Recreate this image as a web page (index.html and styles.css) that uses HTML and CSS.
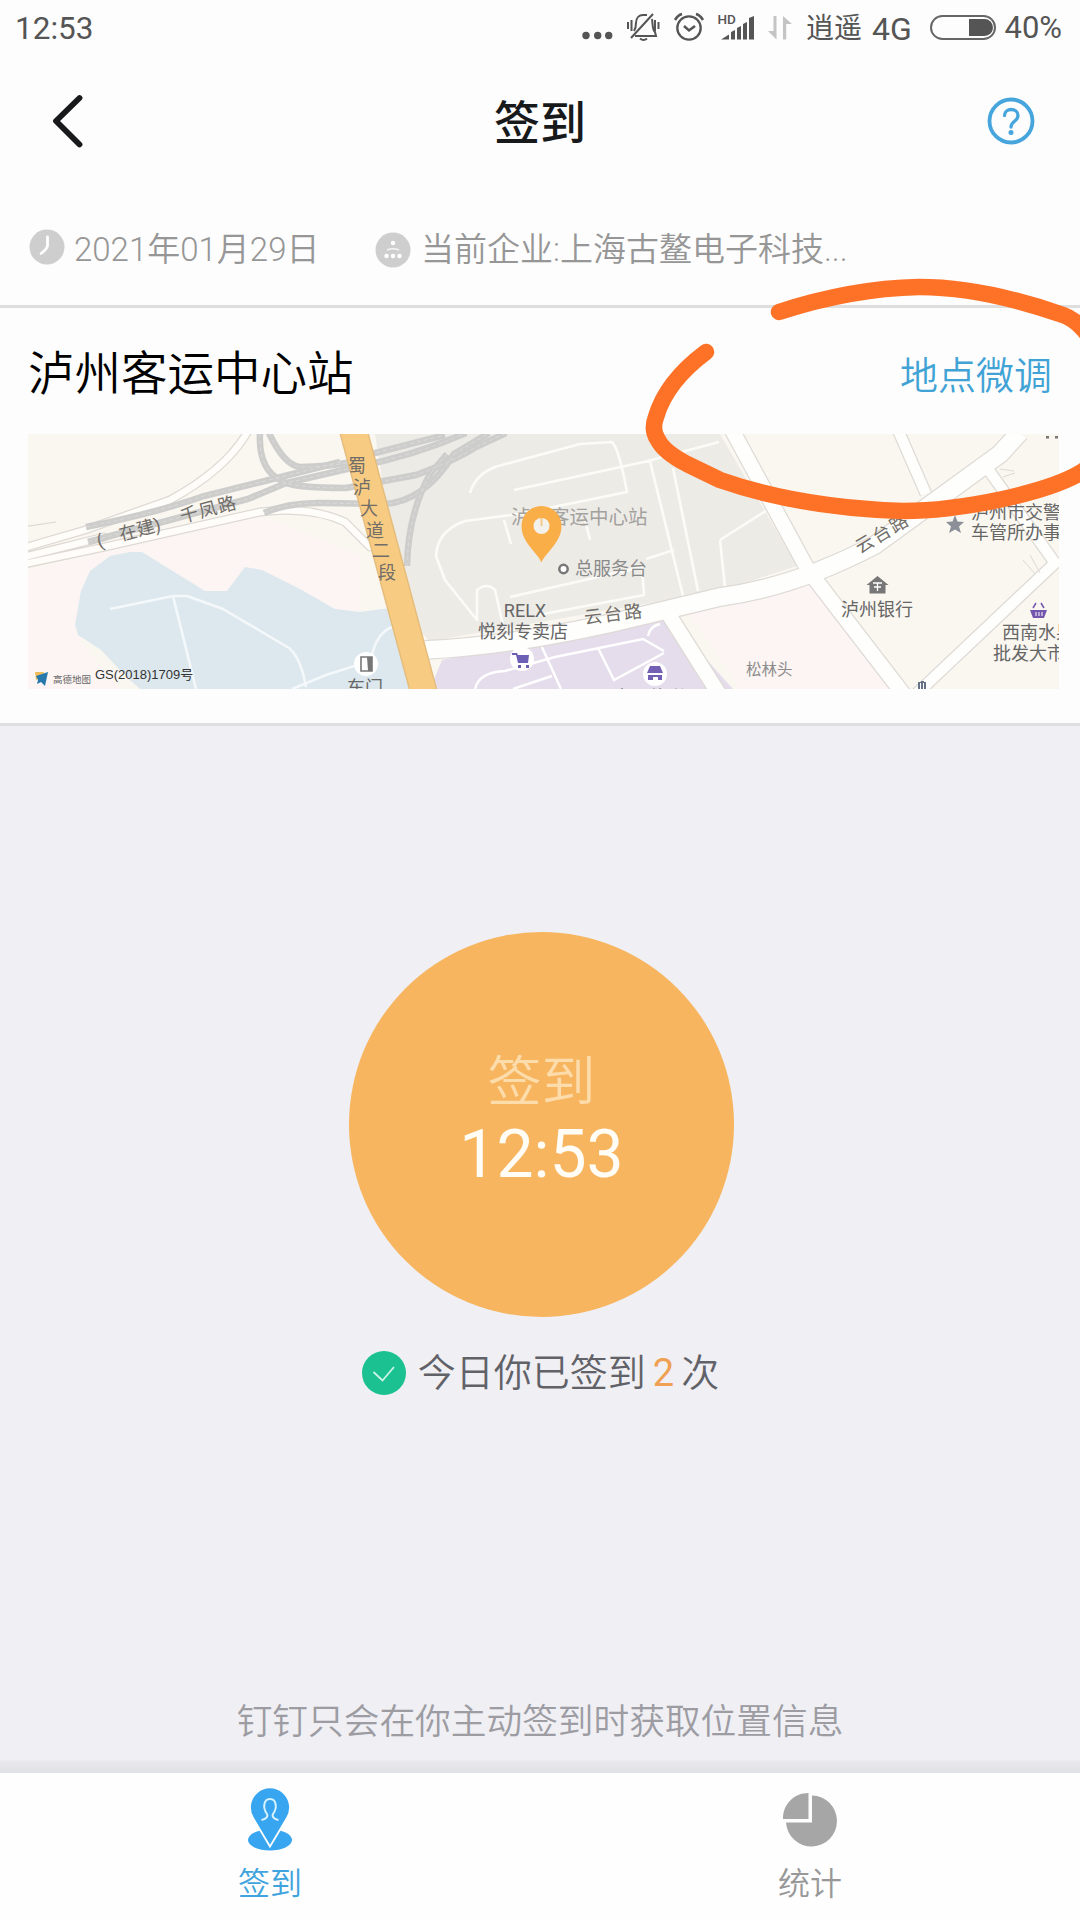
FILE: index.html
```html
<!DOCTYPE html>
<html lang="zh-CN">
<head>
<meta charset="utf-8">
<title>签到</title>
<link rel="stylesheet" href="styles.css">
</head>
<body>
<div class="app">
  <div class="statusbar">
    <span class="clock">12:53</span>
    <svg class="status-icons" width="216" height="48" viewBox="580 0 216 48">
      <g fill="#555"><circle cx="586" cy="35.5" r="3.7"/><circle cx="597.7" cy="35.5" r="3.7"/><circle cx="608.7" cy="35.5" r="3.7"/></g>
      <g fill="none" stroke="#555" stroke-width="2">
        <path d="M634 31c2-3 2-5 2-8 0-5 3-8 7-8h4M652 19c1 6 0 10 3 13l1 4h-21M653 14l-22 24M628 22v7M631.5 20v11M655 20v11M658.5 22v7"/>
        <path d="M640 38.5q3.500 3 7 0"/>
        <circle cx="689" cy="28" r="11.700" stroke-width="2.300"/>
        <path d="M684 26l5 4.500 6-4.500M675 20q3-5 7-6M703 20q-3-5-7-6" stroke-width="2.500"/>
      </g>
      <text x="717.500" y="24" class="hd">HD</text>
      <path fill="#555" d="M721 39.500l8-5v5zM731 32l4-2v9.500h-4zM737 28l4-2v13.500h-4zM743 24l4-2v17.500h-4zM749 18l5-2v23.500h-5z"/>
      <path fill="#c4c4c4" d="M773.500 16h3v23.500L768 31h5.500zM783 39.500h3.200V24H792l-9-8z"/>
    </svg>
    <span class="carrier">逍遥</span>
    <span class="network">4G</span>
    <span class="battery"><span class="charge"></span></span>
    <span class="percent">40%</span>
  </div>

  <header class="header">
    <svg width="40" height="60" viewBox="48 91 40 60"><path d="M79.500 98L56 121l23.500 23.500" fill="none" stroke="#18191a" stroke-width="5.800" stroke-linecap="round" stroke-linejoin="round"/></svg>
    <h1 class="title">签到</h1>
    <svg width="50" height="50" viewBox="986 96 50 50" fill="none" stroke="#45a5dc" stroke-linecap="round"><circle cx="1011" cy="121" r="21.500" stroke-width="3.800"/><path d="M1004.500 115.500c0-8 13.500-8 13.500 0 0 6-7 5.500-7 11.500" stroke-width="3.300"/><circle cx="1011" cy="132.500" r="1.200" stroke-width="2.600"/></svg>
  </header>

  <div class="meta">
    <svg class="meta-clock" width="36" height="36" viewBox="0 0 36 36"><circle cx="18" cy="18" r="17.500" fill="#cecece"/><path d="M18.500 8v8.500q0 3-6.500 8" fill="none" stroke="#fff" stroke-width="2.800" stroke-linecap="round"/></svg>
    <span class="date">2021年01月29日</span>
    <svg width="36" height="36" viewBox="0 0 36 36"><circle cx="18" cy="18" r="17.500" fill="#cecece"/><path d="M12 18q6-2.500 12 0" fill="none" stroke="#f4f4f4" stroke-width="1.500"/><g fill="#fff"><circle cx="18" cy="11" r="2.200"/><circle cx="11.500" cy="24" r="2.200"/><circle cx="18" cy="24" r="2.200"/><circle cx="24.500" cy="24" r="2.200"/></g></svg>
    <span class="company">当前企业:上海古鳌电子科技...</span>
  </div>

  <section class="place">
    <div class="place-head">
      <h2 class="place-name">泸州客运中心站</h2>
      <a class="adjust">地点微调</a>
    </div>
    <svg class="map" width="1031" height="255" viewBox="28 434 1031 255">
      <path fill="#faf7f1" d="M28 434h1031v255H28z"/>
      <path fill="#fcf5f3" d="M28 570L260 515 360 555V620L80 640 120 689H28zM680 600l130-20 90 109H740z"/>
      <path fill="#dce8ee" d="M75 625l6-34 9-20 20-15 20-4h12l63 39h22l18-24 17 3 38 19 35 20 25 3 30-4 25 81H140q-12-10-23-22l-16-17-23-15z"/>
      <path fill="#edebe6" d="M375 434h345l77 132-77 25-290 50-32-30-14-120z"/>

      <g fill="none" stroke-linecap="round">
        <g stroke="#ded9d3" stroke-width="9"><path d="M20 549L85 530 170 500Q225 470 247 433M20 558l84-21M20 565l80-17 160-36q50-6 85 10l25 25"/></g>
        <g stroke="#fefdfa" stroke-width="6.500"><path d="M20 549L85 530 170 500Q225 470 247 433M20 558l84-21M20 565l80-17 160-36q50-6 85 10l25 25"/></g>
        <path d="M22 527l34-5" stroke="#ddd8d2" stroke-width="1.200"/>
      </g>
      <g fill="none" stroke="#cdcdcc" stroke-width="6.500">
        <path d="M86 527q70-14 118-31l61-15 75-19M88 542l160-43 38-16 70-16q60-12 110-34"/>
        <path d="M260 433q-2 37 22 48 10 7 64 7l70-13q38-14 60-28l30-14M269 433q15 32 31 34 55-1 75-14l70-18M264 513q25-11 60-10l60 1q40-2 70-50l35-21M447 454l-17 20q-22 40-23 92"/>
      </g>
      <g fill="none" stroke="#dcdbd9" stroke-width="1" stroke-dasharray="4 3">
        <path d="M86 527q70-14 118-31l61-15 75-19M88 542l160-43 38-16 70-16q60-12 110-34M260 433q-2 37 22 48 10 7 64 7l70-13q38-14 60-28l30-14M269 433q15 32 31 34 55-1 75-14l70-18M264 513q25-11 60-10l60 1q40-2 70-50l35-21M447 454l-17 20q-22 40-23 92"/>
      </g>

      <g fill="none" stroke="#fbfbf8" stroke-width="2.600" stroke-linejoin="round">
        <path d="M470 493q6-20 28-27l82-22 32-2q7 7 15 50l-108 22-54 7q-28 10-29 35l9 24 32 40V590q10-8 18 0l8 35M514 490l130-28 75-20M504 520l7 24M585 520l5 20M650 461l33 135M673 468l25 123M510 597l132-30 2 28-106 20M646 559l28-9M720 540l52-33M720 540l5 47"/>
        <path stroke="#f4f8fa" d="M110 609l63-13h14l36 13 66 39q12 10 17 39M173 596l23 93M292 689l34-14 38-12M372 655q5-22 20-28"/>
      </g>

      <path fill="#e5dcec" d="M442 660l213-42q15 0 24 11l54 60H430z"/>
      <g fill="none" stroke="#fff" stroke-width="2.400"><path d="M475 689q4-17 30-18l50-14 88-18 21 12M541 645l20 44M598 648l16 32 50-27M513 689l39-13M648 636q2-10 12-12"/></g>

      <g fill="none" stroke-linejoin="round">
        <g stroke="#dedad5">
          <path stroke-width="20" d="M425 650q100-5 220-35l75-18q75-10 155-52l125-91 20-22"/>
          <path stroke-width="17" d="M732 430l76 140 100 130M664 607l55 87"/>
          <path stroke-width="13" d="M980 458l75 105-145 137M898 430l28 64"/>
        </g>
        <g stroke="#fefefd">
          <path stroke-width="17.500" d="M425 650q100-5 220-35l75-18q75-10 155-52l125-91 20-22"/>
          <path stroke-width="14.500" d="M732 430l76 140 100 130M664 607l55 87"/>
          <path stroke-width="10.500" d="M980 458l75 105-145 137M898 430l28 64"/>
        </g>
        <path stroke="#ddd9d5" d="M1023 560l12 14M1030 555l10 18M1000 469l14 2M1003 477l12-4"/>
      </g>
      <path d="M340 433h28l69 258h-27z" fill="#f8cb82" stroke="#e5bd7d" stroke-width="1.500"/>

      <g class="poi" fill="#666">
        <text transform="translate(99 548) rotate(-17)" class="road">(</text>
        <text transform="translate(121 541) rotate(-15)" class="road">在建)</text>
        <text transform="translate(182 523) rotate(-15)" class="road" letter-spacing="1.500">千凤路</text>
        <g class="road" text-anchor="middle">
          <text x="357" y="472">蜀</text><text x="362" y="494">泸</text><text x="369" y="515">大</text><text x="375" y="537">道</text><text x="381" y="557">二</text><text x="387" y="579">段</text>
        </g>
        <text transform="translate(585 624) rotate(-7)" class="road" letter-spacing="2">云台路</text>
        <text transform="translate(860 554) rotate(-31)" class="road" letter-spacing="2">云台路</text>
        <text x="511" y="524" class="station">泸州客运中心站</text>
        <text x="575" y="575" class="light">总服务台</text>
        <text x="525" y="617" text-anchor="middle">RELX</text>
        <text x="523" y="638" text-anchor="middle">悦刻专卖店</text>
        <text x="841" y="616">泸州银行</text>
        <text x="746" y="675" class="small">松林头</text>
        <text x="971" y="519">泸州市交警支</text>
        <text x="971" y="539">车管所办事处</text>
        <text x="1002" y="639">西南水果</text>
        <text x="993" y="660">批发大市场</text>
        <text x="347" y="694">车门</text>
        <text x="613" y="704">中国体彩</text>
        <text x="95" y="679" class="gs">GS(2018)1709号</text>
        <text x="53" y="683" class="brand">高德地图</text>
      </g>
      <path fill="#777" d="M1046 436h3v2.500h-3zM1055 436h3v2.500h-3z"/>
      <circle cx="563.500" cy="569" r="4.200" fill="#fff" stroke="#777" stroke-width="2.500"/>
      <path fill="#8a8f98" d="M955 515l2.500 6.500 6.500.5-5 4.500 2 6.500-6-3.500-6 3.500 2-6.500-5-4.500 6.500-.5z"/>
      <path fill="#777" d="M877.500 576l11 9h-3v8.500h-16V585h-3z"/><path d="M873 583h9M877.500 583v8M874 587h7" stroke="#fff" stroke-width="1.300"/>
      <g fill="#fff"><circle cx="522" cy="659" r="12"/><circle cx="655" cy="674" r="12"/><circle cx="366" cy="664" r="12"/></g>
      <path fill="#6c60b5" d="M512 653h5l1 2h11l-1 8h-10l-2-8h-4zM518 665h3v3h-3zM526 665h3v3h-3z"/>
      <path fill="#7360b5" d="M650 666h10l3 7h-16zM648 675h14v5h-4v-3h-5v3h-5z"/>
      <path fill="none" stroke="#777" stroke-width="1.600" d="M361 657h11v14h-11z"/><path fill="#777" d="M367 657h5v14h-4z"/>
      <path fill="#7257ad" d="M1030 610h17l-3 8h-11z"/><path d="M1033 608l3-5M1044 608l-3-5" stroke="#7257ad" stroke-width="1.500"/><path d="M1036 612v4M1039 612v4M1042 612v4" stroke="#fff"/>
      <path fill="#667386" d="M918 682h3v-1h3v1h2v7h-8z"/><path d="M920.500 683v6M923.500 683v6" stroke="#fff"/>
      <path fill="#efbd5b" d="M35 672h9l-2 5-6 3z"/><path fill="#2779ad" d="M36 676l12-4-3 14-4-4-4 2 1-4z"/>
      <path fill="#f9ae48" d="M541.500 562.500c-4-10-20-20-20-36.500a20 20 0 0 1 40 0c0 16.500-16 26.500-20 36.500z"/><circle cx="541.500" cy="526" r="8" fill="#f3f1ec"/><path d="M541.500 518v8" stroke="#f3c98d" stroke-width="2"/>
    </svg>
  </section>

  <main class="main">
    <button class="checkin"><span class="checkin-label">签到</span><span class="checkin-time">12:53</span></button>
    <p class="count">
      <svg width="44" height="44" viewBox="0 0 44 44"><circle cx="22" cy="22" r="22" fill="#1bc191"/><path d="M11.500 21l9 8.500L32 16" fill="none" stroke="#cdf3e6" stroke-width="1.800"/></svg>
      <span class="count-text">今日你已签到<b class="num">2</b>次</span>
    </p>
    <p class="hint">钉钉只会在你主动签到时获取位置信息</p>
  </main>

  <nav class="tabs">
    <a class="tab active">
      <svg width="46" height="64" viewBox="247 1788 46 64"><ellipse cx="270" cy="1840" rx="22" ry="10.500" fill="#38a5f0"/><path d="M270 1846.500l-17-28.500a20 20 0 1 1 34 0z" fill="#38a5f0" stroke="#fff" stroke-width="1.800"/><path d="M261.500 1820c4-1 7-3 5.500-6-4.500-6-3.500-15 3-15s7.500 9 3 15c-1.500 3 1.500 5 5.500 6" fill="none" stroke="#d7f2ff" stroke-width="2"/></svg>
      <span>签到</span>
    </a>
    <a class="tab">
      <svg width="54" height="64" viewBox="784 1788 54 64" fill="#a6a6a6"><path d="M809.500 1793v26H784c0-15 11-26 25.500-26zM813 1795.500a25.500 25.500 0 1 1-26 27h26z"/></svg>
      <span>统计</span>
    </a>
  </nav>

  <svg class="marker" width="1080" height="320" viewBox="0 220 1080 320"><path d="M779 312C825 297 870 288 919 287C970 287 1020 300 1063 315Q1072 318 1080 326C1120 365 1120 450 1080 473C1060 485 1030 493 1003 499C970 506 935 511 903 511C840 509 780 501 720 480L687 464Q664 452 658 440Q651 430 656 417Q666 382 706 352" fill="none" stroke="#fe7227" stroke-width="16.500" stroke-linecap="round" stroke-linejoin="round"/></svg>
</div>
</body>
</html>
```
FILE: styles.css
```css
* { box-sizing: border-box; margin: 0; padding: 0; }
body { background: #efeff4; font-family: Roboto, "Noto Sans CJK SC", sans-serif; font-weight: 350; }
svg { display: block; flex: none; }
.app { position: relative; width: 1080px; height: 1920px; display: flex; flex-direction: column; overflow: hidden; }

.statusbar { height: 56px; padding: 0 17px 0 15px; display: flex; align-items: flex-start; background: #fdfdfd; color: #555; line-height: 56px; white-space: nowrap; font-weight: 400; }
.clock { width: 565px; font-size: 31.500px; line-height: 58px; }
.hd { font: 500 13.500px Roboto, sans-serif; fill: #555; }
.carrier { margin-left: 10px; width: 66px; font-size: 28px; line-height: 58px; }
.network { width: 57.500px; font-size: 32px; line-height: 58px; }
.battery { width: 66px; height: 25px; margin-top: 15px; border: 2px solid #666; border-radius: 13px; display: flex; justify-content: flex-end; padding: 2px 1px 2px 0; }
.charge { width: 24px; background: #555; border-radius: 0 9px 9px 0; }
.percent { margin-left: 9px; font-size: 31px; }

.header { height: 130px; padding: 0 44px 0 48px; background: #fdfdfd; display: flex; align-items: center; justify-content: space-between; }
.title { padding: 4px 0 0 6px; font-size: 46px; font-weight: 500; line-height: 66px; color: #18191a; }

.meta { height: 122px; padding: 9px 0 0 29px; background: #fdfdfd; border-bottom: 3px solid #dedede; display: flex; align-items: center; color: #969696; font-size: 33px; line-height: 44px; white-space: nowrap; }
.meta-clock { margin-top: -6px; }
.date { width: 310px; padding-left: 9px; }
.company { padding-left: 10px; }

.place { height: 418px; padding-left: 28px; background: #fdfdfd; border-bottom: 3px solid #dfdfe1; }
.place-head { height: 126px; padding-right: 28px; display: flex; align-items: center; justify-content: space-between; }
.place-name { padding-top: 5px; font-size: 46.500px; line-height: 60px; font-weight: 350; color: #000; }
.adjust { font-size: 38px; color: #41a3d5; padding-top: 2px; }
.poi { font: 400 18px Roboto, "Noto Sans CJK SC", sans-serif; }
.road { font-size: 18px; fill: #716d68; }
.station { font-size: 19.500px; fill: #a3a19e; }
.light { fill: #898989; }
.small { font-size: 15.500px; fill: #8c8c8c; }
.gs { font: 400 13px "Liberation Sans", "Noto Sans CJK SC", sans-serif; fill: #333; }
.brand { font-size: 9.500px; fill: #666; }

.main { flex: 1; display: flex; flex-direction: column; align-items: center; padding-top: 206px; background: linear-gradient(to top, #dfe0e5 0, #e9e9ed 12px, #efeff4 13px); }
.checkin { width: 385px; height: 385px; margin-left: 3px; border: 0; border-radius: 50%; background: #f7b560; font-family: inherit; display: flex; flex-direction: column; align-items: center; padding-top: 112px; color: #fff; }
.checkin-label { font-size: 54px; line-height: 78px; color: #fddcab; font-weight: 350; }
.checkin-time { font-size: 66px; line-height: 65px; font-weight: 400; color: #fffdf5; }
.count { margin: 28px 0 0 1px; height: 56px; display: flex; align-items: center; gap: 12px; color: #616168; font-size: 38px; line-height: 56px; }
.num { margin: 0 7px; color: #f0a052; font-weight: 400; }
.hint { margin-top: 295px; font-size: 35.700px; line-height: 52px; color: #9c9ca2; }

.tabs { height: 147px; background: #fefefe; display: flex; }
.tab { flex: 1; padding-top: 15px; display: flex; flex-direction: column; align-items: center; font-size: 32px; line-height: 48px; color: #989898; gap: 8px; }
.tab.active { color: #3fa4dd; }
.marker { position: absolute; left: 0; top: 220px; pointer-events: none; }
```
